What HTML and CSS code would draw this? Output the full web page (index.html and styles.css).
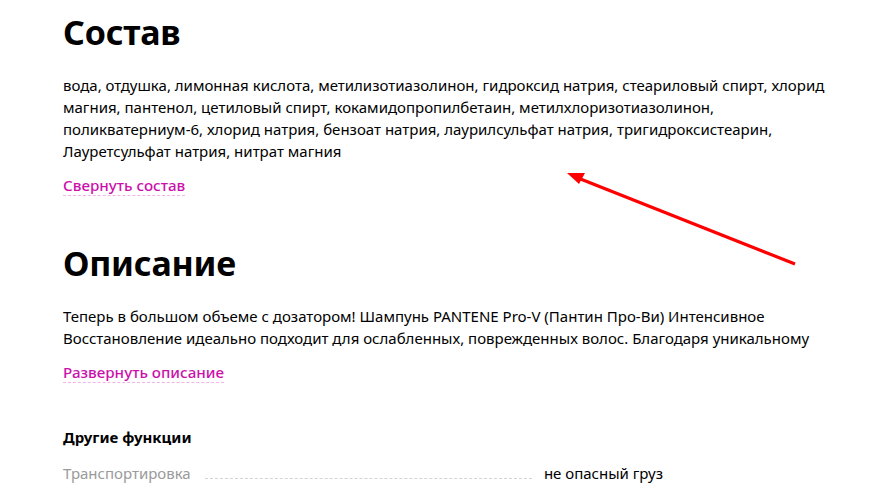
FILE: index.html
```html
<!DOCTYPE html>
<html lang="ru">
<head>
    <meta charset="UTF-8">
    <title>Состав и описание</title>
    <link rel="stylesheet" href="styles.css">
</head>
<body>
    <div class="page">
        <section class="block">
            <h2 class="block-title">Состав</h2>
            <p class="block-text">вода, отдушка, лимонная кислота, метилизотиазолинон, гидроксид натрия, стеариловый спирт, хлорид магния, пантенол, цетиловый спирт, кокамидопропилбетаин, метилхлоризотиазолинон, поликватерниум-6, хлорид натрия, бензоат натрия, лаурилсульфат натрия, тригидроксистеарин, Лауретсульфат натрия, нитрат магния</p>
            <span class="toggle">Свернуть состав</span>
        </section>

        <section class="block">
            <h2 class="block-title">Описание</h2>
            <p class="block-text">Теперь в большом объеме с дозатором! Шампунь PANTENE Pro-V (Пантин Про-Ви) Интенсивное Восстановление идеально подходит для ослабленных, поврежденных волос. Благодаря уникальному</p>
            <span class="toggle">Развернуть описание</span>
        </section>

        <section class="params">
            <h3 class="params-title">Другие функции</h3>
            <div class="param-row">
                <span class="param-name">Транспортировка</span>
                <span class="param-dots"></span>
                <span class="param-value">не опасный груз</span>
            </div>
        </section>

        <svg class="arrow" width="894" height="501" viewBox="0 0 894 501">
            <line x1="795" y1="264" x2="578" y2="178" stroke="#ff0000" stroke-width="3.2"/>
            <polygon points="567,173 585,173 579,184" fill="#ff0000"/>
        </svg>
    </div>
</body>
</html>
```

FILE: styles.css
```css
body {
    margin: 0;
    background: #fff;
    color: #000;
    font-family: "Noto Sans", "Open Sans", Arial, sans-serif;
}
.page {
    width: 775px;
    padding: 0 0 0 63px;
}
.block + .block {
    margin-top: 47px;
}
.block-title {
    font-size: 34px;
    font-weight: 700;
    line-height: 40px;
    margin: 12px 0 22px;
    letter-spacing: -0.2px;
}
.block-text {
    font-size: 15px;
    line-height: 22px;
    margin: 0 0 12px;
}
.toggle {
    display: inline-block;
    color: #cb11ab;
    font-size: 15.2px;
    font-weight: 500;
    line-height: 20px;
    border-bottom: 1px dashed #f0b4e6;
}
.params {
    margin-top: 44px;
}
.params-title {
    font-size: 15px;
    font-weight: 700;
    margin: 0 0 16px;
}
.param-row {
    display: flex;
    align-items: baseline;
    width: 600px;
    font-size: 15px;
}
.param-name {
    color: #9a9a9a;
}
.param-dots {
    flex: 1;
    margin: 0 12px 0 14px;
    border-bottom: 1px dashed #d3d3d3;
}
.param-value {
    color: #000;
}
.arrow {
    position: absolute;
    left: 0;
    top: 0;
    pointer-events: none;
}
```
